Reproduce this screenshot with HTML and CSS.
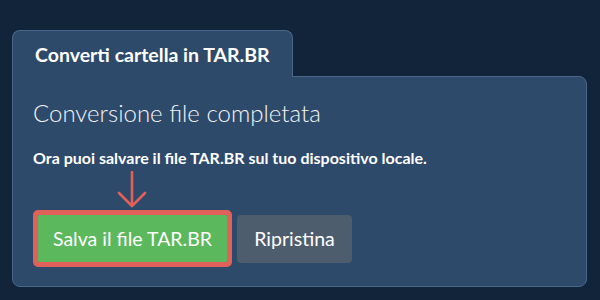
FILE: index.html
```html
<!DOCTYPE html>
<html lang="it">
<head>
<meta charset="utf-8">
<link rel="stylesheet" href="styles.css">
</head>
<body>
<div class="wrap">
  <div class="tab">Converti cartella in TAR.BR</div>
  <div class="panel">
    <h2 class="heading">Conversione file completata</h2>
    <p class="info">Ora puoi salvare il file TAR.BR sul tuo dispositivo locale.</p>
    <div class="actions">
      <div class="highlight">
        <svg class="arrow" width="32" height="38" viewBox="0 0 32 38" aria-hidden="true">
          <path d="M16 1 V35 M3 22 L16 35 L29 22" fill="none" stroke="#e0605a" stroke-width="2.6" stroke-linecap="round" stroke-linejoin="round"/>
        </svg>
        <button class="btn btn-save">Salva il file TAR.BR</button>
      </div>
      <button class="btn btn-reset">Ripristina</button>
    </div>
  </div>
</div>
</body>
</html>
```

FILE: styles.css
```css
html, body {
  margin: 0;
  padding: 0;
  background: #12243a;
  font-family: Lato, "Noto Sans", sans-serif;
  color: #ffffff;
}
.wrap {
  padding: 30px 0 0 12px;
  width: 575px;
}
.tab {
  display: inline-block;
  position: relative;
  z-index: 1;
  box-sizing: border-box;
  height: 47px;
  padding: 12px 22px 0 22px;
  background: #2e4a6a;
  border: 1px solid #4a6789;
  border-bottom: none;
  border-radius: 8px 8px 0 0;
  font-size: 19.5px;
  font-weight: 700;
  line-height: 24px;
  margin-bottom: -1px;
}
.panel {
  box-sizing: border-box;
  width: 575px;
  height: 211px;
  background: #2e4a6a;
  border: 1px solid #4a6789;
  border-radius: 0 8px 8px 8px;
  padding: 21px 20px 0 20px;
}
.heading {
  margin: 0;
  font-size: 24px;
  font-weight: 300;
  line-height: 29px;
  color: #f2f4f7;
}
.info {
  margin: 21px 0 0 0;
  font-size: 16px;
  font-weight: 700;
  line-height: 19px;
}
.actions {
  display: flex;
  align-items: center;
  gap: 5px;
  margin-top: 43px;
}
.highlight {
  position: relative;
  border: 5px solid #e0605a;
  border-radius: 5px;
  display: flex;
}
.arrow {
  position: absolute;
  left: 78px;
  top: -44px;
}
.btn {
  font-family: Lato, "Noto Sans", sans-serif;
  font-size: 19.5px;
  font-weight: 400;
  color: #ffffff;
  border: none;
  margin: 0;
  cursor: pointer;
}
.btn-save {
  height: 47px;
  width: 189px;
  padding: 0;
  background: #5cb85c;
  border-radius: 1px;
}
.btn-reset {
  height: 48px;
  width: 115px;
  padding: 0;
  background: #4e5d6e;
  border-radius: 4px;
}
```
